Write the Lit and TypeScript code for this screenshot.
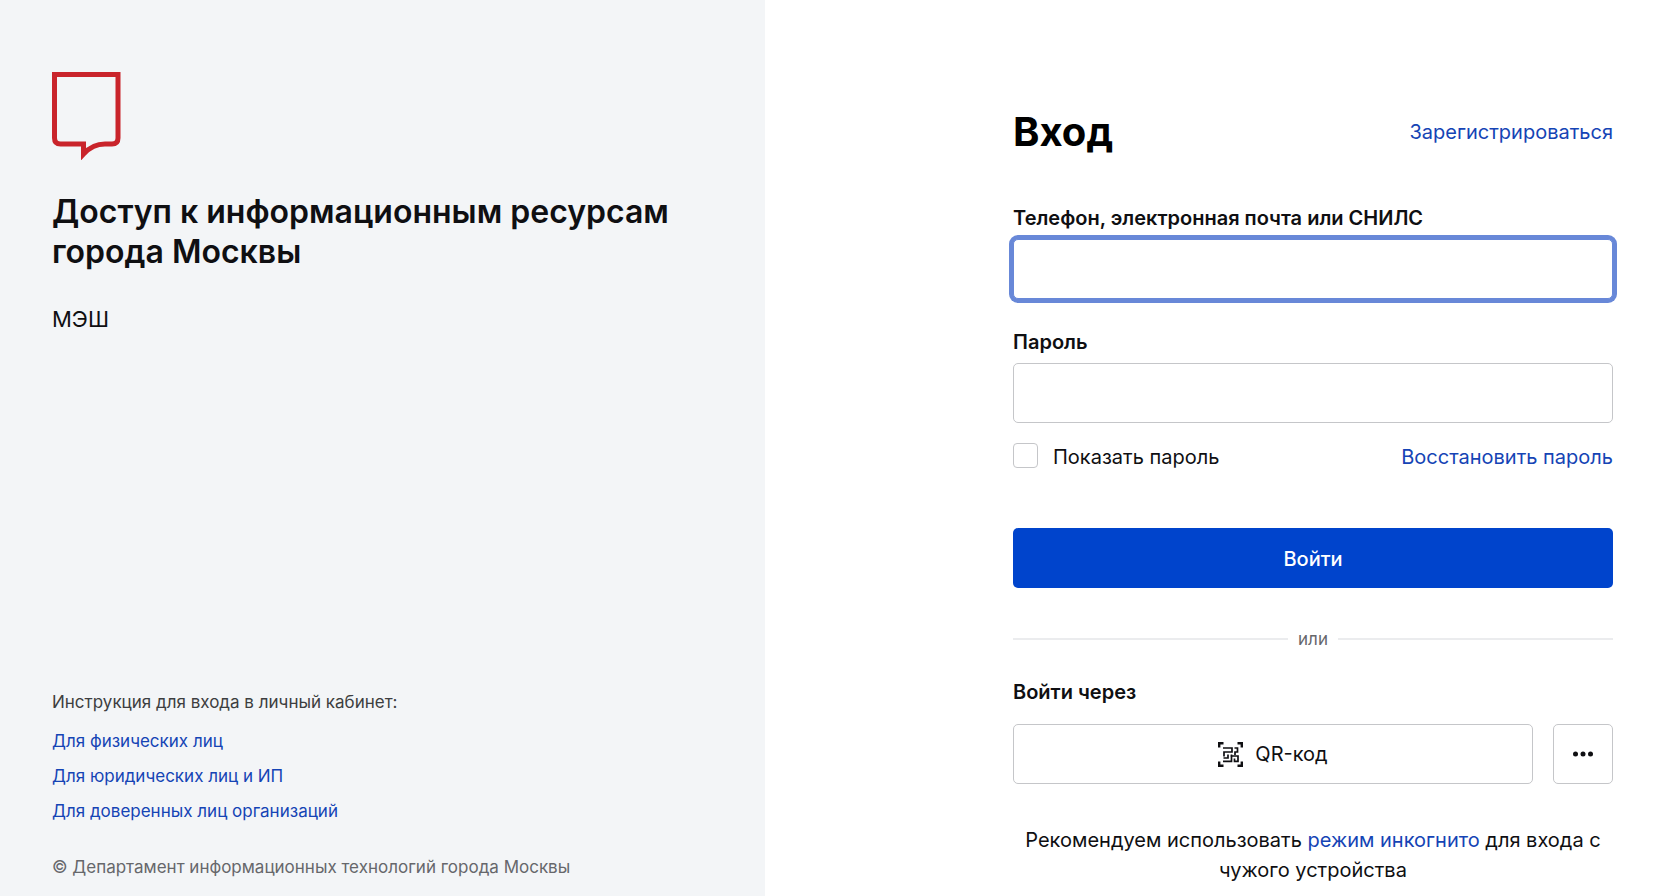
import { LitElement, html, css } from "lit";
import { customElement, state } from "lit/decorators.js";

@customElement("app-root")
export class AppRoot extends LitElement {
  @state() private showPassword = false;

  static styles = css`
    :host {
      display: grid;
      grid-template-columns: minmax(0, 765fr) minmax(0, 903fr);
      min-height: 100vh;
      font-family: Inter, "Noto Sans", sans-serif;
      font-size: 20px;
      line-height: 30px;
      color: #0f0f12;
      background: #fff;
    }
    * { box-sizing: border-box; }
    h1, h2, p, ul { margin: 0; padding: 0; }
    a { color: #1544b5; text-decoration: none; }
    a:hover { text-decoration: underline; }
    .info {
      display: flex;
      flex-direction: column;
      padding: 72px 52px 15px;
      background: #f3f5f7;
    }
    .logo { display: block; width: 69px; height: 88px; }
    .title { margin-top: 32px; font-size: 32px; line-height: 40px; font-weight: 600; }
    .system { margin-top: 32px; font-size: 22px; line-height: 30px; }
    .guide { margin-top: auto; font-size: 17px; line-height: 28px; color: #3d3e40; }
    .links { list-style: none; margin-top: 8px; font-size: 17px; line-height: 35px; }
    .copyright { margin-top: 24px; font-size: 17px; line-height: 28px; color: #66676b; }
    .login {
      display: flex;
      justify-content: flex-end;
      padding: 108px 55px 11px 24px;
    }
    .form { width: 100%; max-width: 600px; }
    .head { display: flex; align-items: center; justify-content: space-between; height: 48px; }
    .heading { font-size: 40px; line-height: 48px; font-weight: 700; color: #000; }
    .label { display: block; font-weight: 600; line-height: 28px; }
    .field { margin-top: 48px; }
    .field + .field { margin-top: 29px; }
    .input {
      display: block;
      width: 100%;
      height: 60px;
      margin-top: 7px;
      padding: 0 16px;
      border: 1px solid #c5c6c9;
      border-radius: 5px;
      background: #fff;
      font: inherit;
      color: inherit;
      outline: none;
    }
    .input:focus { border-color: #6888d8; box-shadow: 0 0 0 4px #6888d8; }
    .options {
      display: flex;
      justify-content: space-between;
      margin-top: 20px;
      line-height: 28px;
    }
    .check { display: flex; align-items: flex-start; gap: 15px; }
    .box {
      appearance: none;
      width: 25px;
      height: 25px;
      margin: 0;
      border: 1px solid #c5c6c9;
      border-radius: 4px;
      background: #fff;
    }
    .box:checked { background: #0044cc; border-color: #0044cc; }
    .submit {
      display: block;
      width: 100%;
      height: 60px;
      margin-top: 57px;
      padding: 2px 0 0;
      border: 0;
      border-radius: 5px;
      background: #0044cc;
      color: #fff;
      font: inherit;
      font-weight: 500;
    }
    .divider {
      display: flex;
      align-items: center;
      gap: 10px;
      margin-top: 38px;
      font-size: 17px;
      line-height: 26px;
      color: #66676b;
    }
    .divider::before, .divider::after { content: ""; flex: 1; height: 2px; background: #ebecee; }
    .subtitle { margin-top: 25px; font-size: 20px; line-height: 30px; font-weight: 600; }
    .methods { display: flex; gap: 20px; margin-top: 17px; }
    .method {
      display: flex;
      align-items: center;
      justify-content: center;
      gap: 12px;
      height: 60px;
      border: 1px solid #c5c6c9;
      border-radius: 5px;
      background: #fff;
      font: inherit;
      color: inherit;
      padding: 0;
    }
    .qr { flex: 1; }
    .more { width: 60px; }
    .hint { margin-top: 41px; text-align: center; }
  `;

  firstUpdated() {
    this.renderRoot.querySelector<HTMLInputElement>("#login")?.focus();
  }

  private toggle(e: Event) {
    this.showPassword = (e.target as HTMLInputElement).checked;
  }

  render() {
    return html`
      <section class="info">
        <svg class="logo" viewBox="0 0 69 88" fill="none" stroke="#c9242b" stroke-width="5" aria-hidden="true">
          <path d="M2.5 2.5H66V66Q66 72 60 72H53C44 72 37 76 31.500 82V72H8.500Q2.500 72 2.500 66Z" />
        </svg>
        <h2 class="title">Доступ к информационным ресурсам города Москвы</h2>
        <p class="system">МЭШ</p>
        <p class="guide">Инструкция для входа в личный кабинет:</p>
        <ul class="links">
          <li><a href="#">Для физических лиц</a></li>
          <li><a href="#">Для юридических лиц и ИП</a></li>
          <li><a href="#">Для доверенных лиц организаций</a></li>
        </ul>
        <p class="copyright">© Департамент информационных технологий города Москвы</p>
      </section>
      <main class="login">
        <form class="form" @submit=${(e: Event) => e.preventDefault()}>
          <div class="head">
            <h1 class="heading">Вход</h1>
            <a href="#">Зарегистрироваться</a>
          </div>
          <div class="field">
            <label class="label" for="login">Телефон, электронная почта или СНИЛС</label>
            <input class="input" id="login" type="text" />
          </div>
          <div class="field">
            <label class="label" for="password">Пароль</label>
            <input class="input" id="password" type=${this.showPassword ? "text" : "password"} />
          </div>
          <div class="options">
            <label class="check"><input class="box" type="checkbox" @change=${this.toggle} />Показать пароль</label>
            <a href="#">Восстановить пароль</a>
          </div>
          <button class="submit" type="submit">Войти</button>
          <div class="divider">или</div>
          <h2 class="subtitle">Войти через</h2>
          <div class="methods">
            <button class="method qr" type="button">
              <svg width="25" height="25" viewBox="0 0 25 25" fill="none" stroke="#0f0f12" aria-hidden="true">
                <path stroke-width="2.4" d="M1.200 5.500V1.200H5.500M19.500 1.200H23.800V5.500M23.800 19.500V23.800H19.500M5.500 23.800H1.200V19.500" />
                <path stroke-width="1.700" d="M5 6H14V10H6V14.500M16.500 6H19.500V10H17V13M10 12.500V16H5.500M5 19.300H13.500V12.500M12.500 14H20V19.300H16.500V16.500" />
              </svg>
              QR-код
            </button>
            <button class="method more" type="button" aria-label="Другие способы">
              <svg width="20" height="6" viewBox="0 0 20 6" fill="#0f0f12" aria-hidden="true">
                <circle cx="2.500" cy="3" r="2.500" /><circle cx="10" cy="3" r="2.500" /><circle cx="17.500" cy="3" r="2.500" />
              </svg>
            </button>
          </div>
          <p class="hint">Рекомендуем использовать <a href="#">режим инкогнито</a> для входа с чужого устройства</p>
        </form>
      </main>
    `;
  }
}
